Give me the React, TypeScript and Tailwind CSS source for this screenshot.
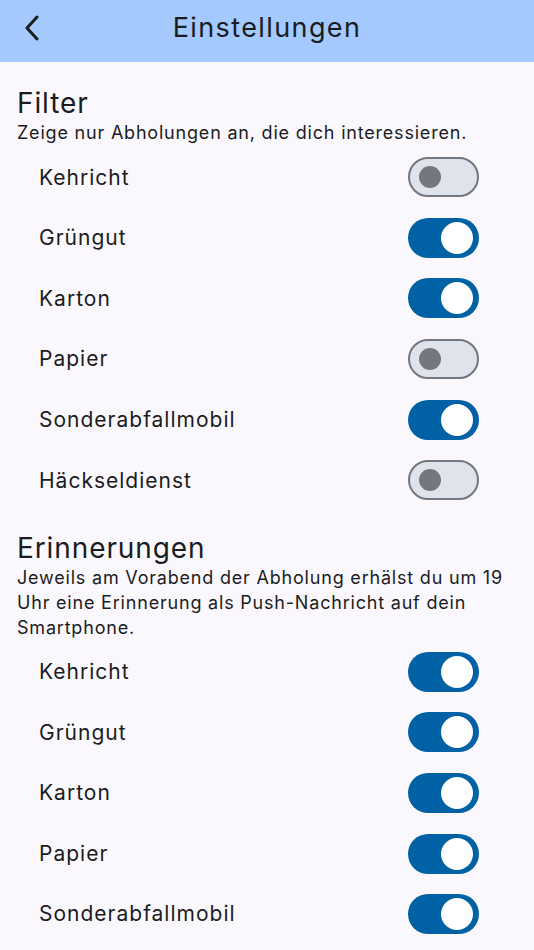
import { useState } from 'react';

type Item = { label: string; on: boolean };

const Toggle = ({ on, onClick }: { on: boolean; onClick: () => void }) => (
  <button
    onClick={onClick}
    className={
      on
        ? 'relative w-[71px] h-[40px] rounded-full bg-[#0061a4] flex items-center'
        : 'relative w-[71px] h-[40px] rounded-full bg-[#e0e2ec] border-[2.5px] border-[#73777f] flex items-center'
    }
  >
    {on ? (
      <span className="absolute right-[6px] w-[32px] h-[32px] rounded-full bg-white" />
    ) : (
      <span className="absolute left-[9px] w-[22px] h-[22px] rounded-full bg-[#73777f]" />
    )}
  </button>
);

const Section = ({ title, text, items }: { title: string; text: string; items: Item[] }) => {
  const [state, setState] = useState(items.map((i) => i.on));
  return (
    <section>
      <h2 className="px-[17px] text-[28px] leading-[34px] tracking-[0.9px]">{title}</h2>
      <p className="pl-[17px] pr-[12px] text-[18px] leading-[25px] tracking-[0.8px]">{text}</p>
      <div className="pt-[2px]">
        {items.map((item, i) => (
          <div key={item.label} className="h-[60.6px] flex items-center justify-between pl-[39px] pr-[55px]">
            <span className="text-[21px] tracking-[1px]">{item.label}</span>
            <Toggle
              on={state[i]}
              onClick={() => setState((s) => s.map((v, j) => (j === i ? !v : v)))}
            />
          </div>
        ))}
      </div>
    </section>
  );
};

export default function App() {
  return (
    <div className="w-[534px] h-[950px] overflow-hidden bg-[#fbf8fd] text-[#1a1c1e] font-['Inter',sans-serif]">
      <header className="h-[62px] bg-[#a3c9fe] flex items-center relative">
        <button className="absolute left-[20px] top-[13px] w-[24px] h-[30px] flex items-center justify-center">
          <svg width="16" height="26" viewBox="0 0 16 26" fill="none">
            <path d="M13 2 L3 13 L13 24" stroke="#1a1c1e" strokeWidth="3" strokeLinecap="round" strokeLinejoin="round" />
          </svg>
        </button>
        <h1 className="w-full text-center text-[27px] tracking-[1.4px] pb-[6px]">Einstellungen</h1>
      </header>
      <div className="pt-[24px]">
        <Section
          title="Filter"
          text="Zeige nur Abholungen an, die dich interessieren."
          items={[
            { label: 'Kehricht', on: false },
            { label: 'Grüngut', on: true },
            { label: 'Karton', on: true },
            { label: 'Papier', on: false },
            { label: 'Sonderabfallmobil', on: true },
            { label: 'Häckseldienst', on: false },
          ]}
        />
        <div className="pt-[20px]">
          <Section
            title="Erinnerungen"
            text="Jeweils am Vorabend der Abholung erhälst du um 19 Uhr eine Erinnerung als Push-Nachricht auf dein Smartphone."
            items={[
              { label: 'Kehricht', on: true },
              { label: 'Grüngut', on: true },
              { label: 'Karton', on: true },
              { label: 'Papier', on: true },
              { label: 'Sonderabfallmobil', on: true },
            ]}
          />
        </div>
      </div>
    </div>
  );
}
